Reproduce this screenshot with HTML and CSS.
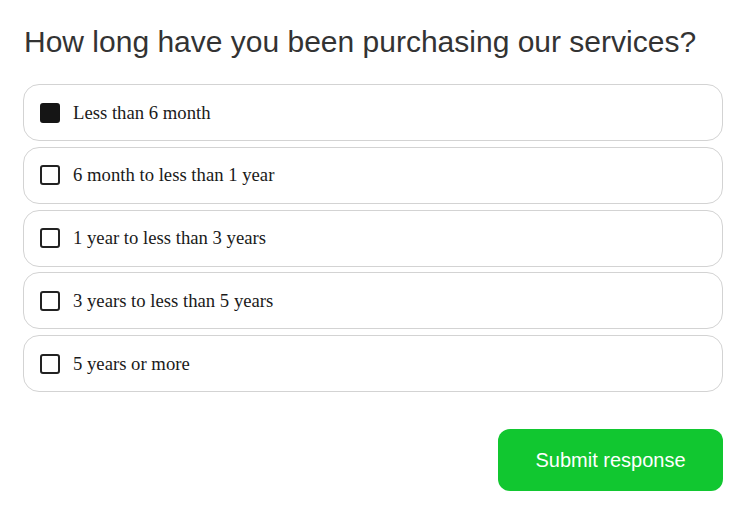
FILE: index.html
```html
<!DOCTYPE html>
<html>
<head>
<meta charset="utf-8">
<link rel="stylesheet" href="styles.css">
</head>
<body>
<div class="survey">
  <h1 class="question">How long have you been purchasing our services?</h1>
  <div class="options">
    <label class="option"><span class="box checked"></span><span class="label">Less than 6 month</span></label>
    <label class="option"><span class="box"></span><span class="label">6 month to less than 1 year</span></label>
    <label class="option"><span class="box"></span><span class="label">1 year to less than 3 years</span></label>
    <label class="option"><span class="box"></span><span class="label">3 years to less than 5 years</span></label>
    <label class="option"><span class="box"></span><span class="label">5 years or more</span></label>
  </div>
  <div class="actions">
    <button class="submit">Submit response</button>
  </div>
</div>
</body>
</html>
```
FILE: styles.css
```css
html, body {
  margin: 0;
  padding: 0;
  background: #ffffff;
}
.survey {
  padding: 0 21px 0 23px;
}
.question {
  margin: 0;
  padding-top: 24px;
  font-family: "Liberation Sans", Arial, sans-serif;
  font-weight: normal;
  font-size: 30px;
  line-height: 36px;
  color: #333333;
  padding-left: 1px;
}
.options {
  margin-top: 24px;
  display: flex;
  flex-direction: column;
  gap: 5.75px;
}
.option {
  box-sizing: border-box;
  height: 57px;
  border: 1px solid #d3d3d3;
  border-radius: 16px;
  display: flex;
  align-items: center;
  padding-left: 16px;
  gap: 13px;
}
.box {
  box-sizing: border-box;
  width: 20px;
  height: 20px;
  border: 2px solid #222222;
  border-radius: 3px;
  background: #ffffff;
}
.box.checked {
  background: #151515;
  border-color: #151515;
}
.label {
  font-family: "Liberation Serif", "Times New Roman", serif;
  font-size: 18.7px;
  color: #1a1a1a;
}
.actions {
  display: flex;
  justify-content: flex-end;
  margin-top: 37px;
}
.submit {
  width: 225px;
  height: 62px;
  border: none;
  border-radius: 12px;
  background: #11c730;
  color: #ffffff;
  font-family: "Liberation Sans", Arial, sans-serif;
  font-size: 20px;
}
```
